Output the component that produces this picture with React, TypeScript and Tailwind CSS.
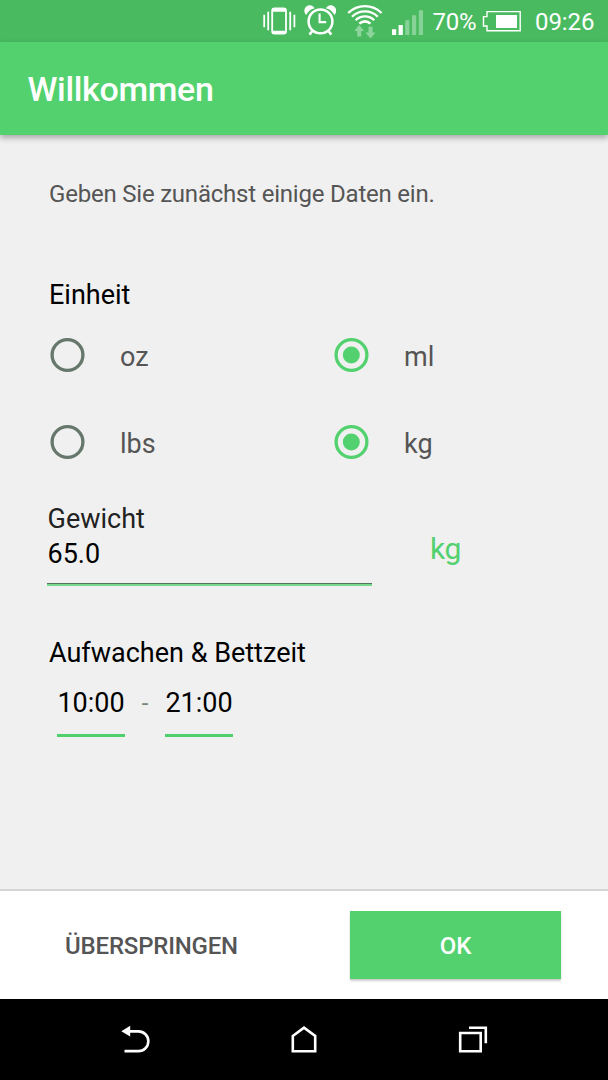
import React from "react";

function VibrateIcon() {
  return (
    <svg className="ml-[263px] block shrink-0" width="33" height="42" viewBox="263 0 33 42" fill="none" stroke="white">
      <rect x="272.2" y="8.4" width="13.8" height="25.2" rx="2.4" strokeWidth="1.8" />
      <path d="M272.5 10.2h13M272.5 32.2h13" strokeWidth="3" />
      <path d="M264.2 14.8v12.4M268.2 11.8v18.4M290.2 11.8v18.4M294.4 14.8v12.4" strokeWidth="1.8" />
    </svg>
  );
}

function AlarmIcon() {
  return (
    <svg className="ml-[8px] block shrink-0" width="32" height="42" viewBox="304 0 32 42" fill="none" stroke="white">
      <circle cx="320.500" cy="21.400" r="11.900" strokeWidth="2.500" />
      <path d="M319.600 13.500v8.600h6.600" strokeWidth="2.100" />
      <path d="M312.300 31l-2.800 3.600M328.500 31l2.800 3.600" strokeWidth="2.600" />
      <path d="M306 13.800a4.600 4.600 0 0 1 7.600-6c-3 .9-5.800 3.100-7.600 6zM334.500 13.800a4.600 4.600 0 0 0-7.600-6c3 .9 5.800 3.100 7.600 6z" fill="white" strokeWidth="1.300" />
    </svg>
  );
}

function WifiIcon() {
  return (
    <svg className="ml-[11px] block shrink-0" width="36" height="42" viewBox="347 0 36 42" fill="none" stroke="white">
      <path d="M348.200 13a23.500 23.500 0 0 1 33.400 0" strokeWidth="2.300" />
      <path d="M352 16.700a18.200 18.200 0 0 1 25.800 0" strokeWidth="2.300" />
      <path d="M355.600 20.200a13.200 13.200 0 0 1 18.600 0" strokeWidth="2.300" />
      <path d="M359.400 23.600a8 8 0 0 1 11 0" strokeWidth="2.600" />
      <path d="M359.200 25l5 6h-3v5.500h-4v-5.500h-3zM370.500 38.400l5-6h-3v-5.600h-4v5.600h-3z" fill="#8dd59c" stroke="none" />
    </svg>
  );
}

function SignalIcon() {
  return (
    <svg className="ml-[8px] block shrink-0" width="34" height="42" viewBox="391 0 34 42">
      <path d="M392 29.300h4.200v5.700H392zM398.600 25h4.200v10h-4.200z" fill="white" />
      <path d="M405.200 20.300h4.200V35h-4.200zM412 15.300h4.200V35H412zM418.800 10.200h4.200V35h-4.200z" fill="#86d297" />
    </svg>
  );
}

function BatteryIcon() {
  return (
    <svg className="block shrink-0" width="39" height="42" viewBox="482 0 39 42">
      <path d="M487 11.600h33.200v19.200H487v-4.800h-3.500v-9.400h3.500z" fill="none" stroke="white" strokeWidth="1.400" />
      <path d="M496 15h21v13h-21z" fill="white" />
    </svg>
  );
}

function StatusBar() {
  return (
    <div className="flex h-[42px] bg-[#4aba60] text-[24px] leading-[45px] text-white">
      <VibrateIcon />
      <AlarmIcon />
      <WifiIcon />
      <SignalIcon />
      <span className="ml-[7.500px] w-[49.500px] shrink-0 tracking-[-0.300px]">70%</span>
      <BatteryIcon />
      <span className="ml-[14px] tracking-[-0.100px]">09:26</span>
    </div>
  );
}

function RadioOption({ label, checked = false }: { label: string; checked?: boolean }) {
  return (
    <label className="flex h-[87px] w-[284px] items-center">
      <input type="radio" checked={checked} readOnly className="sr-only" />
      <svg className="size-[36px]" viewBox="0 0 36 36">
        <circle cx="17.500" cy="18" r="15.400" fill="none" stroke={checked ? "#52d16e" : "#66776b"} strokeWidth="3.300" />
        {checked && <circle cx="17.300" cy="18" r="8.500" fill="#52d16e" />}
      </svg>
      <span className="ml-[34px] pt-[4px] text-[27px] leading-[32px] text-[#555]">{label}</span>
    </label>
  );
}

function TimeField({ value }: { value: string }) {
  return (
    <div className="h-[50px] w-[68px] border-b-[3px] border-[#4fd06b] text-center text-[27px] leading-[32px] text-black">
      {value}
    </div>
  );
}

export default function App() {
  return (
    <div className="flex h-[1080px] w-[608px] flex-col overflow-hidden bg-[#f0f0f0] font-['Roboto',sans-serif] whitespace-nowrap">
      <StatusBar />
      <header className="flex h-[93px] items-center bg-[#52d16e] pl-[27.500px] shadow-[0_3px_6px_rgba(0,0,0,0.3)]">
        <h1 className="text-[34px] leading-[40px] font-medium tracking-[-0.330px] text-white">Willkommen</h1>
      </header>

      <main className="flex h-[754px] flex-col pl-[49px]">
        <p className="mt-[44px] text-[24px] leading-[30px] tracking-[-0.210px] text-[#555]">Geben Sie zunächst einige Daten ein.</p>
        <h2 className="mt-[70px] text-[27px] leading-[32px] text-black">Einheit</h2>
        <div className="grid w-[568px] grid-cols-[284px_284px] pl-[1px]">
          <RadioOption label="oz" />
          <RadioOption label="ml" checked />
          <RadioOption label="lbs" />
          <RadioOption label="kg" checked />
        </div>

        <div className="mt-[18px] -ml-[2px] flex h-[83px]">
          <div className="w-[325px] border-b-[2px] border-[#78d88c]">
            <div className="h-[81px] border-b border-[#55745d] pl-[0.500px] text-[27px]">
              <div className="h-[35px] leading-[32px] text-[#222]">Gewicht</div>
              <div className="leading-[32px] text-black">65.0</div>
            </div>
          </div>
          <div className="ml-[58px] pt-[28px] text-[30px] leading-[36px] tracking-[-0.300px] text-[#52d16e]">kg</div>
        </div>

        <h2 className="mt-[51px] text-[27px] leading-[32px] text-black">Aufwachen &amp; Bettzeit</h2>
        <div className="mt-[18px] ml-[8px] flex">
          <TimeField value="10:00" />
          <span className="w-[40px] text-center text-[24px] leading-[32px] text-[#77857a]">-</span>
          <TimeField value="21:00" />
        </div>
      </main>

      <footer className="flex h-[110px] border-t-[2px] border-[#d5d5d5] bg-white text-[24px] font-medium">
        <button className="mt-[20px] ml-[46px] h-[68px] w-[211px] pt-[2px] tracking-[-0.200px] text-[#555]">ÜBERSPRINGEN</button>
        <button className="mt-[20px] ml-[93px] h-[68px] w-[211px] bg-[#52d16e] pt-[2px] text-white shadow-[0_2px_2px_rgba(0,0,0,0.2)]">OK</button>
      </footer>

      <nav className="flex h-[81px] bg-black">
        <svg className="ml-[120px]" width="32" height="81" viewBox="120 999 32 81" fill="none" stroke="white" strokeWidth="2.600">
          <path d="M129 1031.400h9.500a9.800 9.800 0 0 1 0 19.700H124.500" />
          <path d="M121.300 1031.200l8.900-5.400v10.800z" fill="white" stroke="none" />
        </svg>
        <svg className="ml-[138px]" width="28" height="81" viewBox="290 999 28 81" fill="none" stroke="white" strokeWidth="2.600">
          <path d="M292.800 1036l11.200-8.400 11.200 8.400v15.300h-22.400z" />
        </svg>
        <svg className="ml-[139px]" width="32" height="81" viewBox="457 999 32 81" fill="none" stroke="white" strokeWidth="2.600">
          <path d="M460.200 1033h20.500v18.300h-20.500z" />
          <path d="M469 1027.800h16.800v15.500" />
        </svg>
      </nav>
    </div>
  );
}
